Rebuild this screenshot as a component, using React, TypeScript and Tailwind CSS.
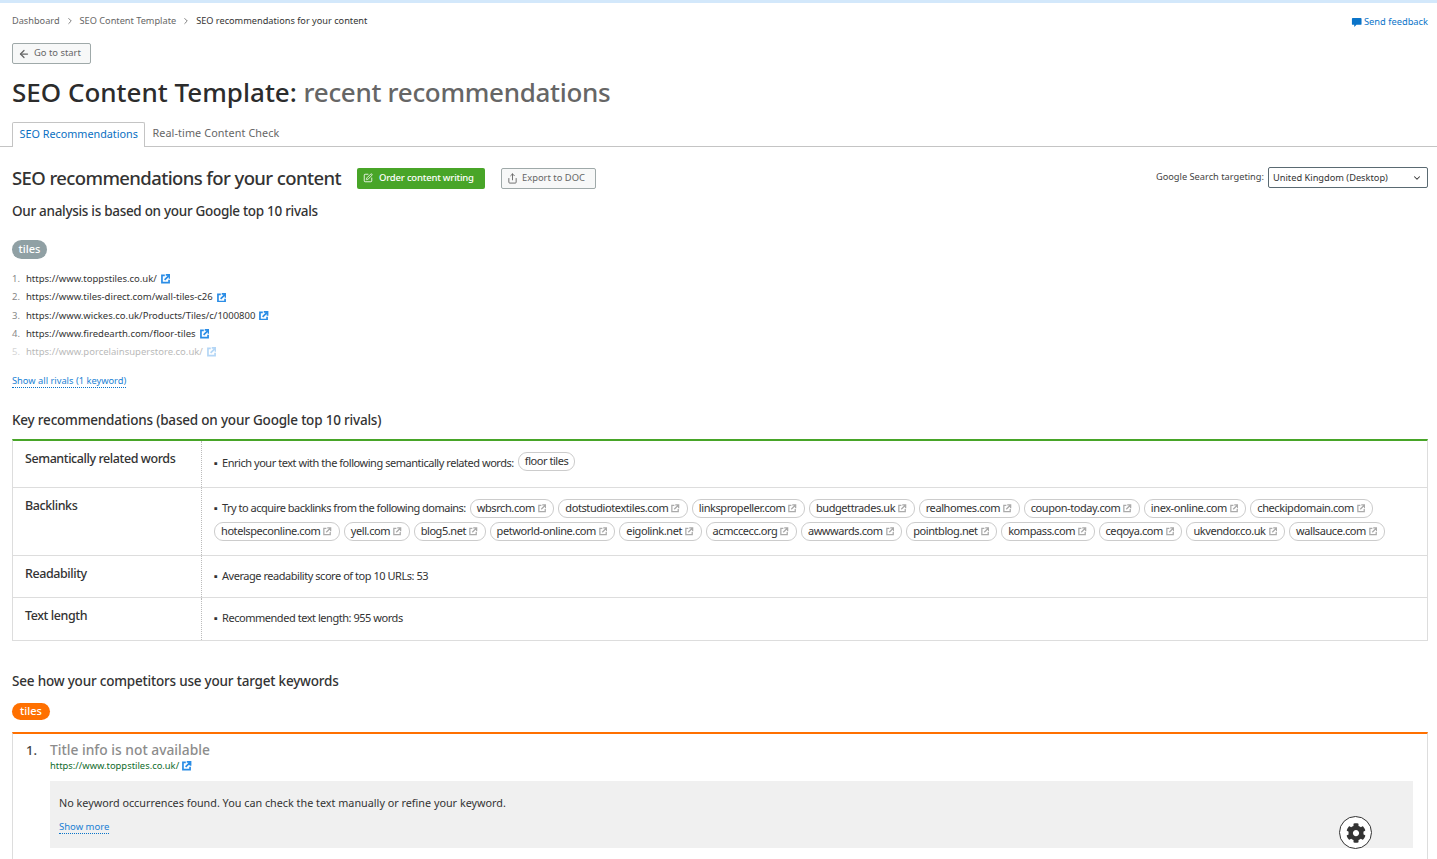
import { ArrowLeft, ChevronDown, ChevronRight, Share, SquarePen } from 'lucide-react'
import { FaCog } from 'react-icons/fa'

const rivals = [
  'https://www.toppstiles.co.uk/',
  'https://www.tiles-direct.com/wall-tiles-c26',
  'https://www.wickes.co.uk/Products/Tiles/c/1000800',
  'https://www.firedearth.com/floor-tiles',
]

const domainsA = ['wbsrch.com', 'dotstudiotextiles.com', 'linkspropeller.com', 'budgettrades.uk', 'realhomes.com', 'coupon-today.com', 'inex-online.com', 'checkipdomain.com']
const domainsB = ['hotelspeconline.com', 'yell.com', 'blog5.net', 'petworld-online.com', 'eigolink.net', 'acmccecc.org', 'awwwards.com', 'pointblog.net', 'kompass.com', 'ceqoya.com', 'ukvendor.co.uk', 'wallsauce.com']

function ExtIcon({ className, weight = 1.5 }: { className: string; weight?: number }) {
  return (
    <svg viewBox="0 0 10 10" fill="none" stroke="currentColor" className={className}>
      <path d="M4 1.5H1V9H8.5V6" strokeWidth={weight} />
      <path d="M3.8 6.2L8.6 1.4M5 1H9V5" strokeWidth={weight} />
    </svg>
  )
}

function Chip({ label }: { label: string }) {
  return (
    <span className="inline-flex h-[19px] items-center gap-[3px] rounded-[9px] border border-[#cccccc] pl-[6px] pr-[7px] text-[11px] tracking-[-0.42px] text-[#333333]">
      {label}
      <ExtIcon className="h-[8.5px] w-[8.5px] text-[#aaaaaa]" />
    </span>
  )
}

function Bullet() {
  return <span className="inline-block w-[8px] shrink-0 tracking-normal">▪</span>
}

function Row({ title, className, children }: { title: string; className: string; children: React.ReactNode }) {
  return (
    <div className={`flex border-b border-[#dddddd] last:border-b-0 ${className}`}>
      <div className="w-[189px] shrink-0 border-r border-dotted border-[#bbbbbb] pl-[12px] pt-[9px] text-[12.5px] font-medium tracking-[-0.42px] text-[#333333]">{title}</div>
      <div className="min-w-0 flex-1 pl-[12px] text-[11px] tracking-[-0.46px] text-[#333333]">{children}</div>
    </div>
  )
}

export default function App() {
  return (
    <div className="h-[859px] overflow-hidden bg-white font-['Noto_Sans',sans-serif] text-[#333333]">
      <div className="h-[3px] bg-[#d3e8fb]" />

      <div className="flex items-start justify-between pl-[12px] pr-[9px] pt-[11px]">
        <div className="flex h-[14px] items-center text-[9.2px] text-[#666666]">
          <span>Dashboard</span>
          <ChevronRight className="mx-[5px] h-[10px] w-[10px]" />
          <span>SEO Content Template</span>
          <ChevronRight className="mx-[5px] h-[10px] w-[10px]" />
          <span className="text-[#333333]">SEO recommendations for your content</span>
        </div>
        <div className="flex h-[15px] items-center gap-[2px] pt-[1px] text-[9.3px] text-[#0a74c9]">
          <svg viewBox="0 0 12 12" className="h-[11px] w-[11px] fill-[#0a74c9]">
            <path d="M2 1H10.5Q11.5 1 11.5 2V7.5Q11.5 8.5 10.5 8.5H6L3.5 11V8.5H2Q1 8.5 1 7.5V2Q1 1 2 1Z" />
          </svg>
          Send feedback
        </div>
      </div>

      <div className="pl-[12px] pt-[14px]">
        <div className="flex h-[21px] w-[79px] items-center gap-[4px] rounded-[2px] border border-[#9fa9a9] bg-[#f7f8f8] pl-[5px] text-[9.4px] text-[#666666]">
          <ArrowLeft className="h-[12px] w-[12px]" strokeWidth={2.5} />
          Go to start
        </div>
      </div>

      <h1 className="pl-[12px] pt-[11px] text-[26px] font-medium leading-[34px] text-[#2c2c2c]">
        SEO Content Template: <span className="tracking-[-0.3px] text-[#666666]">recent recommendations</span>
      </h1>

      <div className="mt-[13px] flex h-[25px] border-b border-[#c4c4c4] pl-[12px] text-[10.8px]">
        <div className="h-[25px] rounded-t-[2px] border border-b-0 border-[#c4c4c4] bg-white px-[6.5px] pt-[3px] text-[#0a6fc2]">SEO Recommendations</div>
        <div className="px-[7px] pt-[3px] tracking-[0.1px] text-[#666666]">Real-time Content Check</div>
      </div>

      <div className="flex items-start justify-between pl-[12px] pr-[9px] pt-[19px]">
        <div className="flex items-center">
          <h2 className="text-[18.5px] font-medium leading-[24px] tracking-[-0.6px] text-[#333333]">SEO recommendations for your content</h2>
          <div className="ml-[16px] flex h-[21px] w-[128px] items-center gap-[6px] rounded-[2px] bg-[#48a528] pl-[6px] text-[9.5px] font-medium tracking-[-0.2px] text-white">
            <SquarePen className="h-[10px] w-[10px]" />
            Order content writing
          </div>
          <div className="ml-[16px] flex h-[21px] w-[95px] items-center gap-[4px] rounded-[2px] border border-[#9fa9a9] bg-[#f7f8f8] pl-[5px] text-[9.4px] text-[#666666]">
            <Share className="h-[11px] w-[11px]" />
            Export to DOC
          </div>
        </div>
        <div className="mt-[1px] flex items-center gap-[4px] text-[9.25px] text-[#444444]">
          <span className="-mt-[2px]">Google Search targeting:</span>
          <div className="flex h-[21px] w-[160px] items-center justify-between rounded-[2px] border border-[#5a6a72] pl-[4px] pr-[5px] text-[#333333]">
            United Kingdom (Desktop)
            <ChevronDown className="h-[10px] w-[10px]" strokeWidth={2.5} />
          </div>
        </div>
      </div>

      <div className="pl-[12px] pt-[11px] text-[13.5px] font-medium leading-[20px] tracking-[-0.3px] text-[#333333]">Our analysis is based on your Google top 10 rivals</div>

      <div className="pl-[12px] pt-[14px]">
        <span className="inline-flex h-[19px] w-[35px] items-center justify-center rounded-[10px] bg-[#90a0a4] text-[11px] font-medium text-white">tiles</span>
      </div>

      <ol className="pl-[12px] pt-[11px] text-[9.5px]">
        {rivals.map((url, i) => (
          <li key={url} className="flex h-[18.3px] items-center">
            <span className="w-[14px] text-[#888888]">{i + 1}.</span>
            <span>{url}</span>
            <ExtIcon className="ml-[4px] h-[9.5px] w-[9.5px] text-[#2b8de6]" weight={1.8} />
          </li>
        ))}
        <li className="flex h-[18px] items-center opacity-35">
          <span className="w-[14px] text-[#888888]">5.</span>
          <span>https://www.porcelainsuperstore.co.uk/</span>
          <ExtIcon className="ml-[4px] h-[9.5px] w-[9.5px] text-[#2b8de6]" weight={1.8} />
        </li>
      </ol>

      <div className="pl-[12px] pt-[14px]">
        <span className="block w-fit border-b border-dotted border-[#0a74c9] text-[9.3px] leading-[12px] text-[#1a7fd4]">Show all rivals (1 keyword)</span>
      </div>

      <h3 className="pl-[12px] pt-[22px] text-[13.5px] font-medium leading-[20px] tracking-[-0.2px] text-[#333333]">Key recommendations (based on your Google top 10 rivals)</h3>

      <div className="ml-[12px] mr-[9px] mt-[9px] border-x border-b border-t-2 border-[#dddddd] border-t-[#48a528]">
        <Row title="Semantically related words" className="h-[47px]">
          <div className="flex items-start gap-[4px] pt-[11px]">
            <span className="flex pt-[3px]"><Bullet />Enrich your text with the following semantically related words:</span>
            <span className="inline-flex h-[19px] items-center rounded-[9px] border border-[#cccccc] px-[6px]">floor tiles</span>
          </div>
        </Row>
        <Row title="Backlinks" className="h-[68px]">
          <div className="flex items-center gap-[4px] pt-[11px]">
            <span className="flex tracking-[-0.5px]"><Bullet />Try to acquire backlinks from the following domains:</span>
            {domainsA.map((d) => <Chip key={d} label={d} />)}
          </div>
          <div className="flex items-center gap-[4px] pt-[4px]">
            {domainsB.map((d) => <Chip key={d} label={d} />)}
          </div>
        </Row>
        <Row title="Readability" className="h-[42px]">
          <div className="flex pt-[12px]"><Bullet />Average readability score of top 10 URLs: 53</div>
        </Row>
        <Row title="Text length" className="h-[42px]">
          <div className="flex pt-[12px]"><Bullet />Recommended text length: 955 words</div>
        </Row>
      </div>

      <h3 className="pl-[12px] pt-[30px] text-[13.5px] font-medium leading-[20px] tracking-[-0.2px] text-[#333333]">See how your competitors use your target keywords</h3>

      <div className="pl-[12px] pt-[6px]">
        <span className="inline-flex h-[17px] w-[38px] items-center justify-center rounded-[9px] bg-[#ff7000] text-[11px] font-medium text-white">tiles</span>
      </div>

      <div className="relative ml-[12px] mr-[9px] mt-[11px] h-[200px] border-x border-t-2 border-[#dddddd] border-t-[#ff7000]">
        <div className="flex pl-[13px] pt-[6px]">
          <span className="w-[24px] text-[13px] font-medium leading-[20px] text-[#444444]">1.</span>
          <div>
            <div className="text-[13.8px] font-medium leading-[20px] text-[#8c8c8c]">Title info is not available</div>
            <div className="flex items-center gap-[3px] text-[9.4px] leading-[12px] text-[#0f6b2c]">
              https://www.toppstiles.co.uk/
              <ExtIcon className="h-[9.5px] w-[9.5px] text-[#2b8de6]" weight={1.8} />
            </div>
          </div>
        </div>
        <div className="ml-[37px] mr-[14px] mt-[9px] h-[67px] bg-[#f0f0f0] pl-[9px] pt-[15px] text-[10.8px] leading-[14px] text-[#333333]">
          No keyword occurrences found. You can check the text manually or refine your keyword.
          <div className="pt-[11px]">
            <span className="block w-fit border-b border-dotted border-[#0a74c9] text-[9.5px] leading-[12px] text-[#1a7fd4]">Show more</span>
          </div>
        </div>
        <div className="absolute left-[1326px] top-[82px] flex h-[33px] w-[33px] items-center justify-center rounded-full border border-[#333333] bg-white">
          <FaCog className="h-[20px] w-[20px] text-[#333333]" />
        </div>
      </div>
    </div>
  )
}
